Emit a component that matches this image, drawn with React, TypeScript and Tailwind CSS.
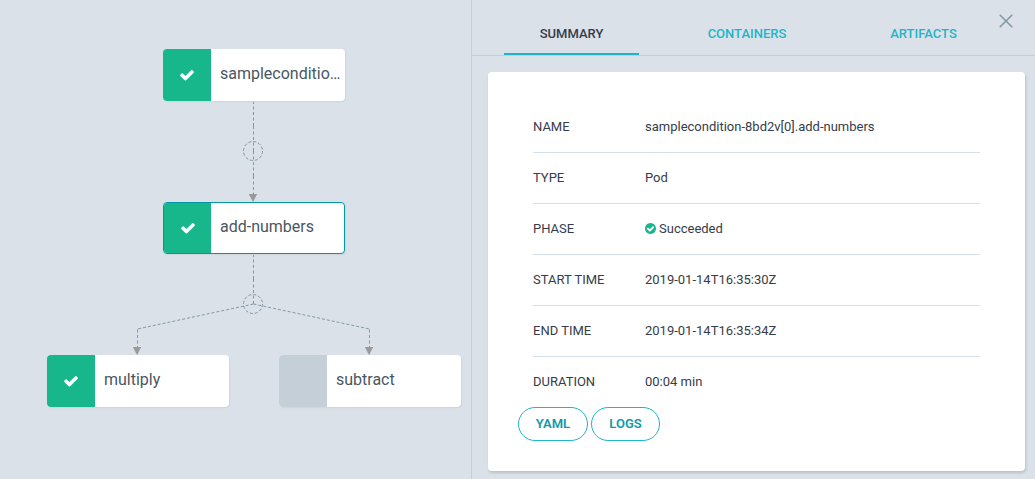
import React from "react";

function CheckIcon({ className }: { className?: string }) {
  return (
    <svg viewBox="0 0 1792 1792" fill="currentColor" className={className}>
      <path d="M1671 566q0 40-28 68l-724 724-136 136q-28 28-68 28t-68-28l-136-136-362-362q-28-28-28-68t28-68l136-136q28-28 68-28t68 28l294 295 656-657q28-28 68-28t68 28l136 136q28 28 28 68z" />
    </svg>
  );
}

function CheckCircleIcon({ className }: { className?: string }) {
  return (
    <svg viewBox="128 128 1536 1536" fill="currentColor" className={className}>
      <path d="M1412 734q0-28-18-46l-91-90q-19-19-45-19t-45 19l-408 407-226-226q-19-19-45-19t-45 19l-91 90q-18 18-18 46 0 27 18 45l362 362q19 19 45 19 27 0 46-19l543-543q18-18 18-45zm252 162q0 209-103 385.5t-279.5 279.5-385.5 103-385.5-103-279.5-279.5-103-385.5 103-385.5 279.5-279.5 385.5-103 385.5 103 279.500 279.500 103 385.500z" />
    </svg>
  );
}

type NodeProps = {
  label: string;
  place: string;
  done?: boolean;
  selected?: boolean;
};

function GraphNode({ label, place, done = true, selected = false }: NodeProps) {
  return (
    <div
      className={`absolute flex h-[52px] w-[182px] overflow-hidden rounded-[4px] bg-white shadow-[1px_1px_1px_#ccd6dd] ${place} ${
        selected ? "border border-[#0097a7]" : ""
      }`}
    >
      <div
        className={`flex shrink-0 items-center justify-center text-white ${
          selected ? "w-[47px]" : "w-12"
        } ${done ? "bg-[#18b78b]" : "bg-[#c5cfd8]"}`}
      >
        {done && <CheckIcon className="size-4" />}
      </div>
      <div
        className={`flex-1 whitespace-nowrap pl-[9px] text-base text-[#495763] ${
          selected ? "leading-[47px]" : "leading-[49px]"
        }`}
      >
        {label}
      </div>
    </div>
  );
}

function Edges() {
  return (
    <svg className="absolute inset-0" width="471" height="479" fill="none">
      <g stroke="#7f97a6" strokeDasharray="3 2.500">
        <path d="M253.500 101V126" />
        <path d="M253.500 126V151" />
        <path d="M253.500 151V176" />
        <path d="M253.500 176V201" />
        <path d="M253.500 254V279" />
        <path d="M253.500 279V304" />
        <path d="M137.500 329.500V354" />
        <path d="M369.500 329.500V354" />
      </g>
      <g stroke="#8299a7" strokeDasharray="3 2">
        <path d="M253.500 304L137.500 329" />
        <path d="M253.500 304L369.500 329" />
      </g>
      <g stroke="#7f97a6" strokeDasharray="3 1.970">
        <circle cx="253" cy="151" r="9.500" />
        <circle cx="253" cy="304" r="9.500" />
      </g>
      <g fill="#999">
        <path d="M248.800 194h8.400l-4.200 8z" />
        <path d="M132.800 347h8.400l-4.200 8z" />
        <path d="M364.800 347h8.400l-4.200 8z" />
      </g>
    </svg>
  );
}

const rows: { name: string; value: React.ReactNode }[] = [
  { name: "NAME", value: "samplecondition-8bd2v[0].add-numbers" },
  { name: "TYPE", value: "Pod" },
  {
    name: "PHASE",
    value: (
      <>
        <CheckCircleIcon className="mb-px mr-[3px] size-[11px] text-[#18b78b]" />
        Succeeded
      </>
    ),
  },
  { name: "START TIME", value: "2019-01-14T16:35:30Z" },
  { name: "END TIME", value: "2019-01-14T16:35:34Z" },
  { name: "DURATION", value: "00:04 min" },
];

const buttonClass =
  "h-[34px] rounded-full border border-[#1fb5c9] text-[13px] font-semibold text-[#0d9aaa]";

export default function App() {
  return (
    <div className="flex h-[479px] w-[1035px] overflow-hidden bg-[#dae1e8] font-[Roboto,sans-serif] text-[#363c4a]">
      <main className="relative w-[471px] shrink-0">
        <Edges />
        <GraphNode label="sampleconditio…" place="left-[163px] top-[49px]" />
        <GraphNode label="add-numbers" place="left-[163px] top-[202px]" selected />
        <GraphNode label="multiply" place="left-[47px] top-[355px]" />
        <GraphNode label="subtract" place="left-[279px] top-[355px]" done={false} />
      </main>

      <aside className="relative flex flex-1 flex-col border-l border-[#c3d0da]">
        <nav className="flex h-14 shrink-0 gap-[41px] border-b border-[#c3d0da] pl-8 text-[13px] font-medium text-[#1fb5c9]">
          <button className="w-[135px] border-b-2 border-[#1fb5c9] pt-[14px] text-[#363c4a]">SUMMARY</button>
          <button className="w-[135px] border-b-2 border-transparent pr-px pt-[14px]">CONTAINERS</button>
          <button className="w-[135px] border-b-2 border-transparent pt-[14px]">ARTIFACTS</button>
        </nav>
        <button className="absolute right-[22px] top-[14px]" aria-label="Close">
          <svg className="size-[14px]" viewBox="0 0 14 14" fill="none" stroke="#8299a6" strokeWidth="1.600" strokeLinecap="round">
            <path d="M1.200 1.200L12.800 12.800M12.800 1.200L1.200 12.800" />
          </svg>
        </button>

        <section className="ml-4 mr-[10px] mt-4 h-[399px] rounded-[4px] bg-white px-[30px] pt-[30px] text-[13px] shadow-[1px_2px_3px_rgba(0,0,0,0.15)]">
          <dl className="px-[15px]">
            {rows.map((row) => (
              <div
                key={row.name}
                className="flex h-[51px] items-center border-b border-[#d5dfe7] last:h-[50px] last:border-b-0"
              >
                <dt className="w-[112px]">{row.name}</dt>
                <dd className="flex items-center">{row.value}</dd>
              </div>
            ))}
          </dl>
          <div className="flex gap-[3px]">
            <button className={`w-[70px] ${buttonClass}`}>YAML</button>
            <button className={`w-[69px] ${buttonClass}`}>LOGS</button>
          </div>
        </section>
      </aside>
    </div>
  );
}
